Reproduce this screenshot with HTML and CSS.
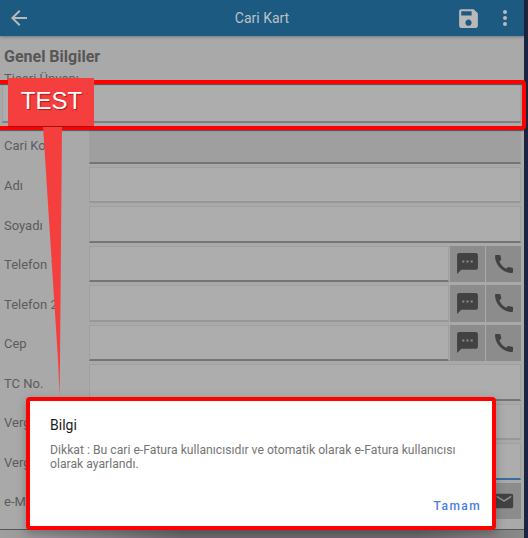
FILE: index.html
```html
<!DOCTYPE html>
<html lang="tr">
<head>
    <meta charset="UTF-8">
    <meta name="viewport" content="width=device-width, initial-scale=1.0">
    <title>Cari Kart</title>
    <link rel="stylesheet" href="styles.css">
</head>
<body>
    <div class="page">
        <header class="topbar">
            <svg class="back-icon" viewBox="0 0 24 24"><path d="M20 11H7.83l5.59-5.59L12 4l-8 8 8 8 1.41-1.41L7.83 13H20v-2z"/></svg>
            <h1>Cari Kart</h1>
            <svg class="save-icon" viewBox="0 0 24 24"><path d="M17 3H5c-1.11 0-2 .9-2 2v14c0 1.1.89 2 2 2h14c1.1 0 2-.9 2-2V7l-4-4zm-5 16c-1.66 0-3-1.34-3-3s1.34-3 3-3 3 1.34 3 3-1.34 3-3 3zm3-10H5V5h10v4z"/></svg>
            <svg class="more-icon" viewBox="0 0 24 24"><path d="M12 8c1.1 0 2-.9 2-2s-.9-2-2-2-2 .9-2 2 .9 2 2 2zm0 2c-1.1 0-2 .9-2 2s.9 2 2 2 2-.9 2-2-.9-2-2-2zm0 6c-1.1 0-2 .9-2 2s.9 2 2 2 2-.9 2-2-.9-2-2-2z"/></svg>
        </header>

        <main class="form">
            <h2>Genel Bilgiler</h2>
            <label class="top-label">Ticari Ünvanı</label>
            <div class="field field-wide"></div>

            <div class="rows">
                <div class="row row-short">
                    <span class="label">Cari Kodu</span>
                    <div class="field field-locked"></div>
                </div>
                <div class="row">
                    <span class="label">Adı</span>
                    <div class="field"></div>
                </div>
                <div class="row">
                    <span class="label">Soyadı</span>
                    <div class="field field-dark"></div>
                </div>
                <div class="row">
                    <span class="label">Telefon 1</span>
                    <div class="field field-dark"></div>
                    <button class="icon-btn"><svg class="sms-icon" viewBox="0 0 24 24"><path d="M20 2H4c-1.1 0-1.99.9-1.99 2L2 22l4-4h14c1.1 0 2-.9 2-2V4c0-1.1-.9-2-2-2zM9 11H7V9h2v2zm4 0h-2V9h2v2zm4 0h-2V9h2v2z"/></svg></button>
                    <button class="icon-btn"><svg class="phone-icon" viewBox="0 0 18 18"><path d="M1 0h3.6q.7 0 .9.7l.8 3.6q.1.5-.3.8L4.300 6.300C5.300 9.500 8.300 12.500 11.400 13.700l1.200-1.500q.3-.4.8-.3l3.900.9q.7.2.7.9V17q0 1-1 1C8 18 0 10 0 1q0-1 1-1z"/></svg></button>
                </div>
                <div class="row">
                    <span class="label">Telefon 2</span>
                    <div class="field"></div>
                    <button class="icon-btn"><svg class="sms-icon" viewBox="0 0 24 24"><path d="M20 2H4c-1.1 0-1.99.9-1.99 2L2 22l4-4h14c1.1 0 2-.9 2-2V4c0-1.1-.9-2-2-2zM9 11H7V9h2v2zm4 0h-2V9h2v2zm4 0h-2V9h2v2z"/></svg></button>
                    <button class="icon-btn"><svg class="phone-icon" viewBox="0 0 18 18"><path d="M1 0h3.6q.7 0 .9.7l.8 3.6q.1.5-.3.8L4.300 6.300C5.300 9.500 8.300 12.500 11.400 13.700l1.200-1.500q.3-.4.8-.3l3.900.9q.7.2.7.9V17q0 1-1 1C8 18 0 10 0 1q0-1 1-1z"/></svg></button>
                </div>
                <div class="row">
                    <span class="label">Cep</span>
                    <div class="field field-dark"></div>
                    <button class="icon-btn"><svg class="sms-icon" viewBox="0 0 24 24"><path d="M20 2H4c-1.1 0-1.99.9-1.99 2L2 22l4-4h14c1.1 0 2-.9 2-2V4c0-1.1-.9-2-2-2zM9 11H7V9h2v2zm4 0h-2V9h2v2zm4 0h-2V9h2v2z"/></svg></button>
                    <button class="icon-btn"><svg class="phone-icon" viewBox="0 0 18 18"><path d="M1 0h3.6q.7 0 .9.7l.8 3.6q.1.5-.3.8L4.300 6.300C5.300 9.500 8.300 12.500 11.400 13.700l1.200-1.500q.3-.4.8-.3l3.900.9q.7.2.7.9V17q0 1-1 1C8 18 0 10 0 1q0-1 1-1z"/></svg></button>
                </div>
                <div class="row">
                    <span class="label">TC No.</span>
                    <div class="field field-dark"></div>
                </div>
                <div class="row">
                    <span class="label">Vergi Dairesi</span>
                    <div class="field"></div>
                </div>
                <div class="row">
                    <span class="label">Vergi No</span>
                    <div class="field field-focus"></div>
                </div>
                <div class="row">
                    <span class="label">e-Mail</span>
                    <div class="field"></div>
                    <button class="icon-btn"><svg class="mail-icon" viewBox="0 0 24 24"><path d="M20 4H4c-1.1 0-1.99.9-1.99 2L2 18c0 1.1.9 2 2 2h16c1.1 0 2-.9 2-2V6c0-1.1-.9-2-2-2zm0 4l-8 5-8-5V6l8 5 8-5v2z"/></svg></button>
                </div>
            </div>
        </main>
        <div class="bottom-bar"></div>
    </div>

    <!-- annotation over the screenshot -->
    <div class="highlight"></div>
    <svg class="pointer" viewBox="0 0 528 538"><polygon points="43,126 62,126 60,360 59.5,396 58,360"/></svg>
    <div class="callout">TEST</div>

    <div class="dialog">
        <h3>Bilgi</h3>
        <p>Dikkat : Bu cari e-Fatura kullanıcısıdır ve otomatik olarak e-Fatura kullanıcısı olarak ayarlandı.</p>
        <div class="dialog-actions"><a href="#">Tamam</a></div>
    </div>
</body>
</html>
```

FILE: styles.css
```css
html, body {
    margin: 0;
    padding: 0;
    height: 100%;
}

body {
    position: relative;
    width: 528px;
    height: 538px;
    overflow: hidden;
    background-color: #1d2442;
    font-family: Roboto, "Liberation Sans", sans-serif;
}

.page {
    width: 524px;
    height: 538px;
    display: flex;
    flex-direction: column;
    background-color: #a9a9a9;
}

.topbar {
    height: 36px;
    flex: none;
    display: flex;
    align-items: center;
    background-color: #1c5a82;
    box-shadow: 0 1px 3px rgba(0, 0, 0, 0.3);
    position: relative;
    fill: #b9b9b9;
}

.topbar h1 {
    margin: 0;
    flex: 1;
    text-align: center;
    font-size: 14px;
    font-weight: 400;
    color: #bcc2c6;
    padding-left: 37px;
}

.back-icon {
    width: 24px;
    height: 24px;
    margin-left: 7px;
}

.save-icon {
    width: 25px;
    height: 25px;
    margin-right: 12px;
}

.more-icon {
    width: 24px;
    height: 24px;
    margin-right: 7px;
}

.form {
    flex: 1;
    padding: 12px 3px 0 4px;
}

.form h2 {
    margin: 0;
    font-size: 16px;
    line-height: 18px;
    font-weight: 700;
    color: #575757;
}

.top-label {
    display: block;
    font-size: 13px;
    line-height: 15px;
    margin-top: 5px;
    margin-bottom: -2px;
    color: #5c5c5c;
}

.field {
    flex: 1;
    box-sizing: border-box;
    background-color: #adadad;
    border: 1px solid #a0a0a0;
    border-bottom: 2px solid #979797;
}

.field-wide {
    height: 39px;
    margin: 0 0 0 -2px;
    border-bottom-color: #808080;
}

.field-locked {
    background-color: #9f9f9f;
    border-bottom-color: #757575;
}

.field-dark {
    border-bottom-color: #757575;
}

.field-focus {
    border-bottom-color: #3c6c9c;
}

.rows {
    display: flex;
    flex-direction: column;
    gap: 3px;
    margin-top: 7px;
}

.row {
    display: flex;
    align-items: stretch;
    height: 36.5px;
    gap: 1px;
}

.row-short {
    height: 33.5px;
}

.row-short .label {
    margin-bottom: 5px;
}

.label {
    width: 85px;
    flex: none;
    margin-top: 2px;
    margin-right: -1px;
    align-self: center;
    font-size: 13px;
    color: #5c5c5c;
    white-space: nowrap;
}

.icon-btn {
    width: 35px;
    flex: none;
    padding: 0;
    border: none;
    display: flex;
    align-items: center;
    justify-content: center;
    background-color: #8c8c8c;
    fill: #424242;
}

.sms-icon {
    width: 25px;
    height: 25px;
}

.phone-icon {
    width: 18px;
    height: 18px;
}

.mail-icon {
    width: 22px;
    height: 22px;
}

.bottom-bar {
    height: 9px;
    flex: none;
    box-sizing: border-box;
    border-top: 1px solid #555;
    background: linear-gradient(90deg, #a0a0a0, #6a6a6a 35%, #6a6a6a 80%, #8a8a8a);
}

.highlight {
    position: absolute;
    left: -6px;
    top: 80px;
    width: 524px;
    height: 42px;
    border: 4px solid #ff0000;
    border-radius: 4px;
    box-shadow: 0 1px 1px rgba(0, 0, 0, 0.5), inset 0 1px 1px rgba(0, 0, 0, 0.5);
}

.pointer {
    position: absolute;
    left: 0;
    top: 0;
    width: 528px;
    height: 538px;
    fill: #f53f3f;
}

.callout {
    position: absolute;
    left: 8px;
    top: 78px;
    width: 86px;
    height: 49px;
    box-sizing: border-box;
    padding-top: 9px;
    padding-left: 1px;
    text-align: center;
    font-family: "Liberation Sans", Arial, sans-serif;
    font-size: 24px;
    line-height: 28px;
    color: #fff;
    background-color: #f53f3f;
    border-bottom: 1px solid #a01010;
    text-shadow: 1px 1px 1px rgba(120, 0, 0, 0.6);
}

.dialog {
    position: absolute;
    left: 26px;
    top: 397px;
    width: 470px;
    height: 133px;
    box-sizing: border-box;
    border: 4px solid #ff0000;
    border-radius: 4px;
    padding: 14px 20px 0;
    background-color: #fff;
    box-shadow: 0 3px 10px rgba(0, 0, 0, 0.25);
}

.dialog h3 {
    margin: 0;
    font-size: 14px;
    line-height: 20px;
    font-weight: 400;
    color: #1c1c1c;
}

.dialog p {
    margin: 8px 0 0;
    font-size: 12.2px;
    line-height: 14px;
    color: #757575;
}

.dialog-actions {
    position: absolute;
    right: 11px;
    bottom: 12px;
}

.dialog-actions a {
    font-size: 12px;
    font-weight: 500;
    letter-spacing: 1.4px;
    color: #4a80e0;
    text-decoration: none;
}
```
